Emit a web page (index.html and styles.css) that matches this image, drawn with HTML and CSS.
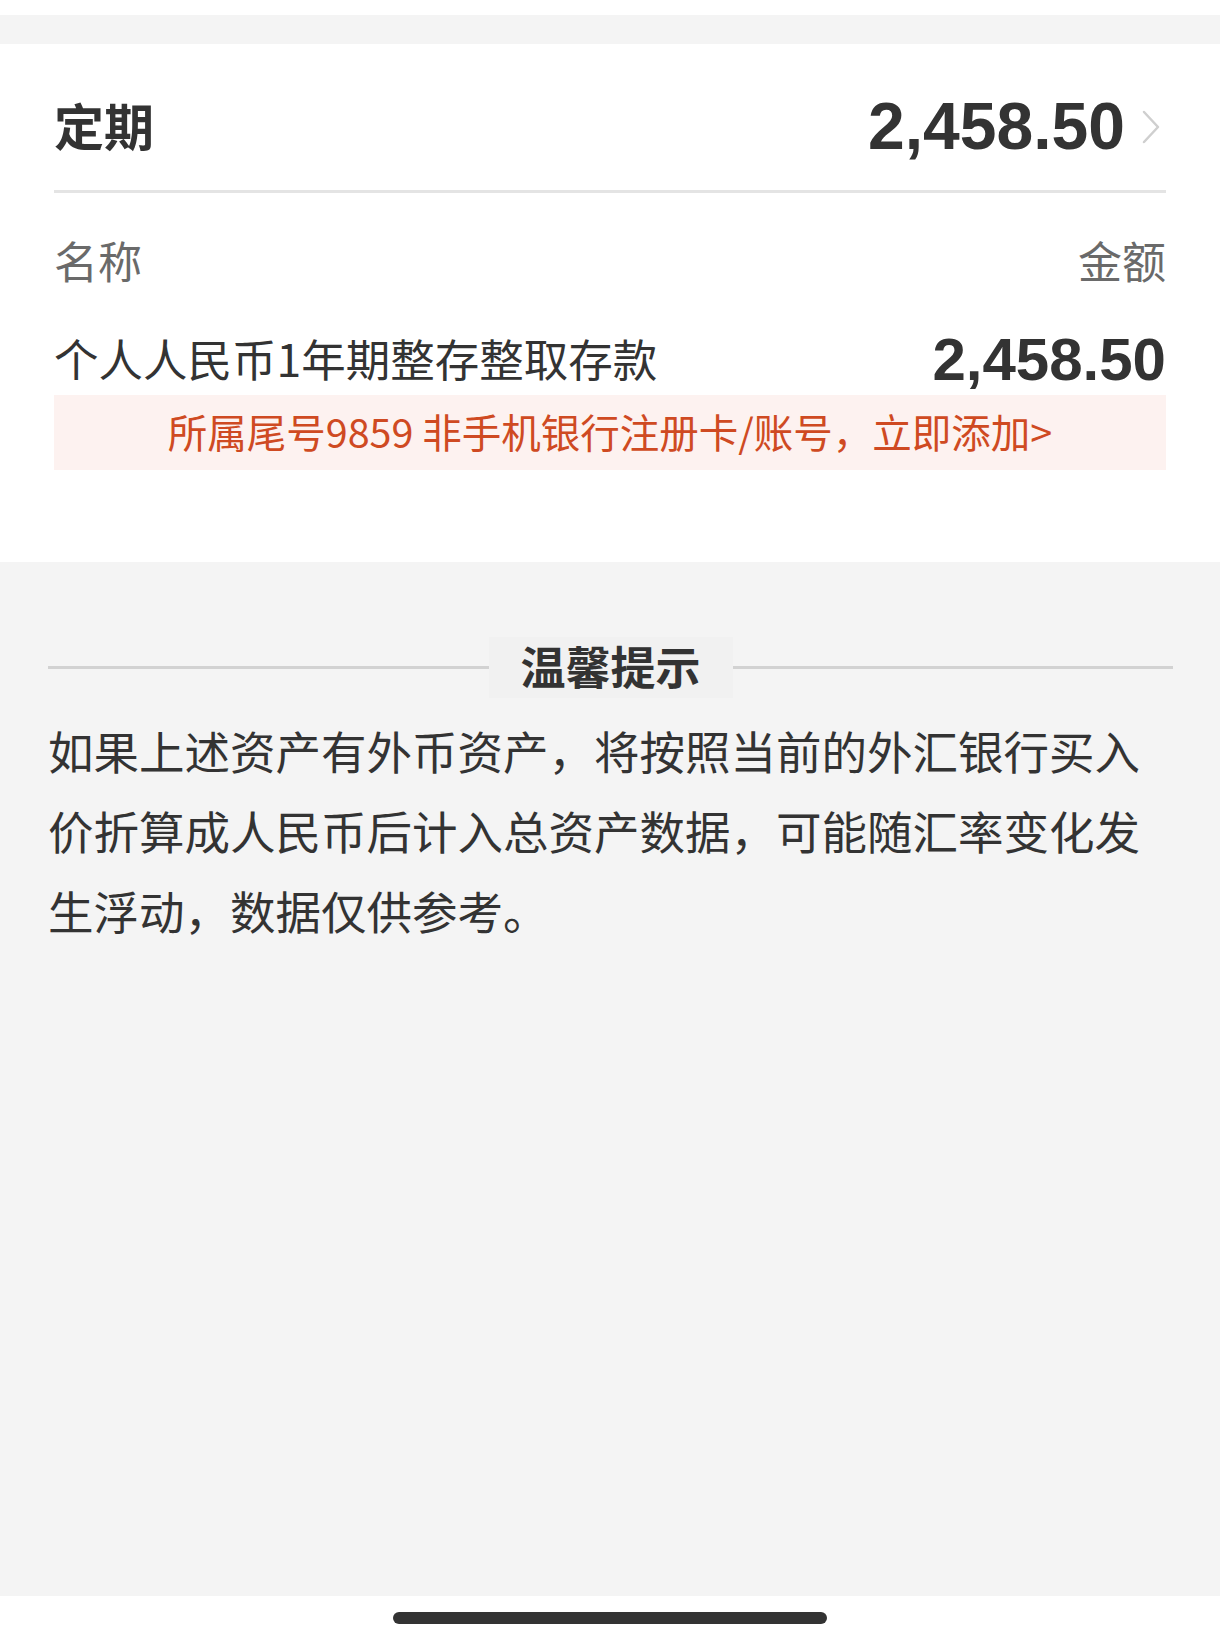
FILE: index.html
```html
<!DOCTYPE html>
<html lang="zh-CN">
<head>
<meta charset="utf-8">
<title>定期</title>
<link rel="stylesheet" href="styles.css">
</head>
<body>
<div class="page">
  <div class="top-strip"></div>
  <div class="gap-band"></div>
  <section class="card">
    <div class="card-head">
      <div class="head-title">定期</div>
      <div class="head-right">
        <span class="head-amount">2,458.50</span>
        <svg class="chevron" width="20" height="36" viewBox="0 0 20 36"><polyline points="3,3 17,18 3,33" fill="none" stroke="#cfcfcf" stroke-width="2.5" stroke-linecap="round" stroke-linejoin="round"/></svg>
      </div>
    </div>
    <div class="col-head">
      <span>名称</span>
      <span>金额</span>
    </div>
    <div class="item-row">
      <span class="item-name">个人人民币1年期整存整取存款</span>
      <span class="item-amount">2,458.50</span>
    </div>
    <div class="notice">所属尾号9859 非手机银行注册卡/账号，立即添加&gt;</div>
  </section>
  <section class="tips">
    <div class="tips-title">
      <span class="tips-line"></span>
      <span class="tips-label">温馨提示</span>
      <span class="tips-line"></span>
    </div>
    <p class="tips-text">如果上述资产有外币资产，将按照当前的外汇银行买入价折算成人民币后计入总资产数据，可能随汇率变化发生浮动，数据仅供参考。</p>
  </section>
  <div class="footer">
    <div class="home-bar"></div>
  </div>
</div>
</body>
</html>
```

FILE: styles.css
```css
* { box-sizing: border-box; }
html, body { margin: 0; padding: 0; }
body {
  background: #ffffff;
  font-family: "Noto Sans CJK SC", "Liberation Sans", sans-serif;
  color: #333333;
}
.page {
  width: 1220px;
  height: 1645px;
  display: flex;
  flex-direction: column;
  overflow: hidden;
}
.top-strip { height: 15px; background: #ffffff; }
.gap-band { height: 29px; background: #f4f4f4; }

.card {
  background: #ffffff;
  padding: 0 54px 92px;
}
.card-head {
  height: 149px;
  padding-top: 18px;
  display: flex;
  align-items: center;
  justify-content: space-between;
  border-bottom: 3px solid #e4e4e4;
}
.head-title {
  font-size: 50px;
  font-weight: 700;
  line-height: 66px;
  margin-top: -4px;
  color: #333333;
}
.head-right {
  display: flex;
  align-items: center;
  gap: 16px;
  margin-right: 5px;
}
.head-amount {
  font-family: "Liberation Sans", Arial, sans-serif;
  font-weight: 700;
  font-size: 66px;
  line-height: 66px;
  color: #333333;
}
.chevron { display: block; margin-top: 2px; }

.col-head {
  display: flex;
  justify-content: space-between;
  padding-top: 37px;
  font-size: 44px;
  line-height: 60px;
  color: #6a6a6a;
}
.item-row {
  display: flex;
  justify-content: space-between;
  align-items: center;
  margin-top: 38px;
  height: 60px;
}
.item-name {
  font-size: 44.5px;
  line-height: 60px;
  color: #333333;
}
.item-amount {
  font-family: "Liberation Sans", Arial, sans-serif;
  font-weight: 700;
  font-size: 60px;
  line-height: 60px;
  margin-top: 3px;
  color: #333333;
}
.notice {
  margin-top: 7px;
  height: 75px;
  line-height: 72px;
  background: #fdf2f0;
  color: #cf4a22;
  font-size: 39.5px;
  text-align: center;
}

.tips {
  flex: 1;
  background: #f4f4f4;
  padding: 75px 47px 0 48px;
}
.tips-title {
  display: flex;
  align-items: center;
  height: 61px;
}
.tips-line {
  flex: 1;
  height: 3px;
  background: #d2d2d2;
}
.tips-label {
  padding: 0 32px;
  background: #f1f1f1;
  height: 61px;
  line-height: 58px;
  font-size: 45px;
  font-weight: 700;
  color: #333333;
}
.tips-text {
  margin: 12px 0 0;
  font-size: 45.5px;
  line-height: 80px;
  color: #333333;
}

.footer {
  height: 49px;
  background: #ffffff;
  display: flex;
  justify-content: center;
  padding-top: 16px;
}
.home-bar {
  width: 434px;
  height: 12px;
  border-radius: 6px;
  background: #333333;
}
```
